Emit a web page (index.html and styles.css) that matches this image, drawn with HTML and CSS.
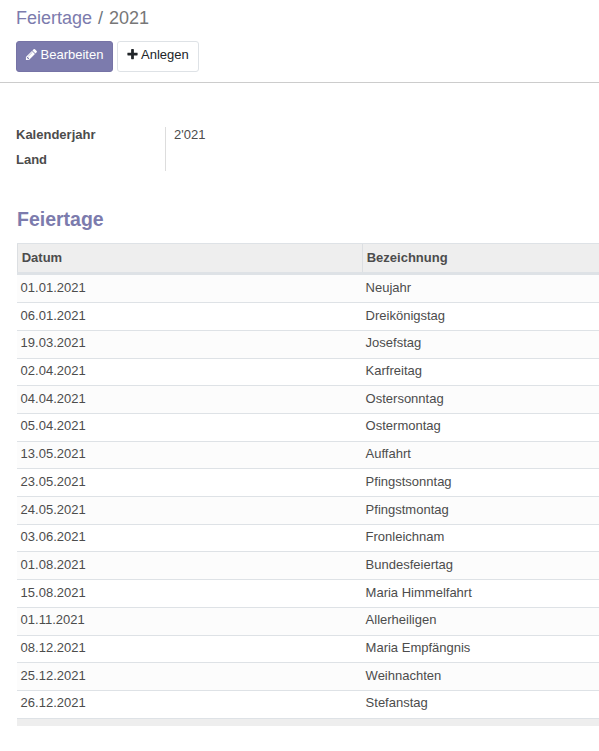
FILE: index.html
```html
<!DOCTYPE html>
<html lang="de">
<head>
<meta charset="utf-8">
<title>Feiertage / 2021</title>
<link rel="stylesheet" href="styles.css">
</head>
<body>
<header class="control-panel">
  <nav class="breadcrumb"><a class="crumb-link">Feiertage</a><span class="crumb-sep">/</span><span class="crumb-current">2021</span></nav>
  <div class="buttons">
    <button class="btn btn-primary"><svg class="icon" viewBox="0 0 1792 1792"><path d="M491 1536l91-91-235-235-91 91v107h128v128h107zm523-928q0-22-22-22-10 0-17 7l-542 542q-7 7-7 17 0 22 22 22 10 0 17-7l542-542q7-7 7-17zm-54-192l416 416-832 832h-416v-416zm683 96q0 53-37 90l-166 166-416-416 166-165q36-38 90-38 53 0 91 38l235 234q37 39 37 91z"/></svg><span class="label-edit">Bearbeiten</span></button>
    <button class="btn btn-secondary"><svg class="icon" viewBox="0 0 1792 1792"><path d="M1600 736v192q0 40-28 68t-68 28h-416v416q0 40-28 68t-68 28h-192q-40 0-68-28t-28-68v-416h-416q-40 0-68-28t-28-68v-192q0-40 28-68t68-28h416v-416q0-40 28-68t68-28h192q40 0 68 28t28 68v416h416q40 0 68 28t28 68z"/></svg><span class="label-create">Anlegen</span></button>
  </div>
</header>
<main class="sheet">
  <div class="fields">
    <div class="labels"><div>Kalenderjahr</div><div>Land</div></div>
    <div class="values">2'021</div>
  </div>
  <h2 class="title">Feiertage</h2>
  <div class="list">
    <div class="head"><div>Datum</div><div>Bezeichnung</div></div>
    <div class="row"><div>01.01.2021</div><div>Neujahr</div></div>
    <div class="row"><div>06.01.2021</div><div>Dreikönigstag</div></div>
    <div class="row"><div>19.03.2021</div><div>Josefstag</div></div>
    <div class="row"><div>02.04.2021</div><div>Karfreitag</div></div>
    <div class="row"><div>04.04.2021</div><div>Ostersonntag</div></div>
    <div class="row"><div>05.04.2021</div><div>Ostermontag</div></div>
    <div class="row"><div>13.05.2021</div><div>Auffahrt</div></div>
    <div class="row"><div>23.05.2021</div><div>Pfingstsonntag</div></div>
    <div class="row"><div>24.05.2021</div><div>Pfingstmontag</div></div>
    <div class="row"><div>03.06.2021</div><div>Fronleichnam</div></div>
    <div class="row"><div>01.08.2021</div><div>Bundesfeiertag</div></div>
    <div class="row"><div>15.08.2021</div><div>Maria Himmelfahrt</div></div>
    <div class="row"><div>01.11.2021</div><div>Allerheiligen</div></div>
    <div class="row"><div>08.12.2021</div><div>Maria Empfängnis</div></div>
    <div class="row"><div>25.12.2021</div><div>Weihnachten</div></div>
    <div class="row"><div>26.12.2021</div><div>Stefanstag</div></div>
    <div class="foot"></div>
  </div>
</main>
</body>
</html>
```
FILE: styles.css
```css
* { box-sizing: border-box; }
body {
  margin: 0;
  background: #fff;
  color: #4c4c4c;
  font: 13px/20px "Liberation Sans", Arial, sans-serif;
  overflow: hidden;
}
.control-panel {
  height: 83px;
  padding: 5px 16px 0;
  border-bottom: 1px solid #ccc;
}
.breadcrumb {
  display: flex;
  height: 36px;
  font-size: 18px;
  line-height: 27px;
}
.crumb-link { color: #7c7bad; }
.crumb-sep { margin: 0 6px; color: #6c757d; }
.crumb-current { color: #777; }
.buttons { display: flex; gap: 4px; }
.btn {
  display: flex;
  align-items: center;
  height: 31px;
  padding: 0 9px 3px 8px;
  border: 1px solid #dee2e6;
  border-radius: 3px;
  background: #fff;
  color: #212529;
  font: inherit;
}
.btn-primary {
  width: 97px;
  border-color: #7673a6;
  background: #7c7bad;
  color: #fff;
}
.btn-secondary { width: 82px; }
.icon {
  flex: none;
  width: 13px;
  height: 13px;
  margin: 0 2px 1px 0;
  fill: currentColor;
}
.btn-primary .icon { margin-right: 2.5px; }
.sheet { padding: 44px 0 0 16px; }
.fields { display: flex; height: 44px; }
.labels {
  width: 149px;
  font-weight: bold;
  line-height: 16px;
}
.labels div { height: 25px; }
.values {
  padding-left: 8px;
  border-left: 1px solid #ddd;
  line-height: 16px;
}
.title {
  margin: 34px 0 0 1px;
  height: 38px;
  color: #7c7bad;
  font-size: 19.5px;
  line-height: 29px;
}
.list { margin-left: 1px; }
.head, .row {
  display: grid;
  grid-template-columns: 345px 1fr;
}
.head {
  height: 32.44px;
  border-top: 1px solid #dee2e6;
  border-bottom: 3px solid #dee2e6;
  background: #eee;
  font-weight: bold;
  line-height: 28px;
}
.head div {
  padding-left: 3.7px;
  border-left: 1px solid #dcdfe2;
}
.row {
  height: 27.704px;
  border-bottom: 1px solid #dee2e6;
  line-height: 25px;
}
.row:nth-child(even) { background: #fcfcfc; }
.row div { margin-top: -0.57px; padding-left: 3.6px; }
.foot { height: 7px; background: #eee; }
```
